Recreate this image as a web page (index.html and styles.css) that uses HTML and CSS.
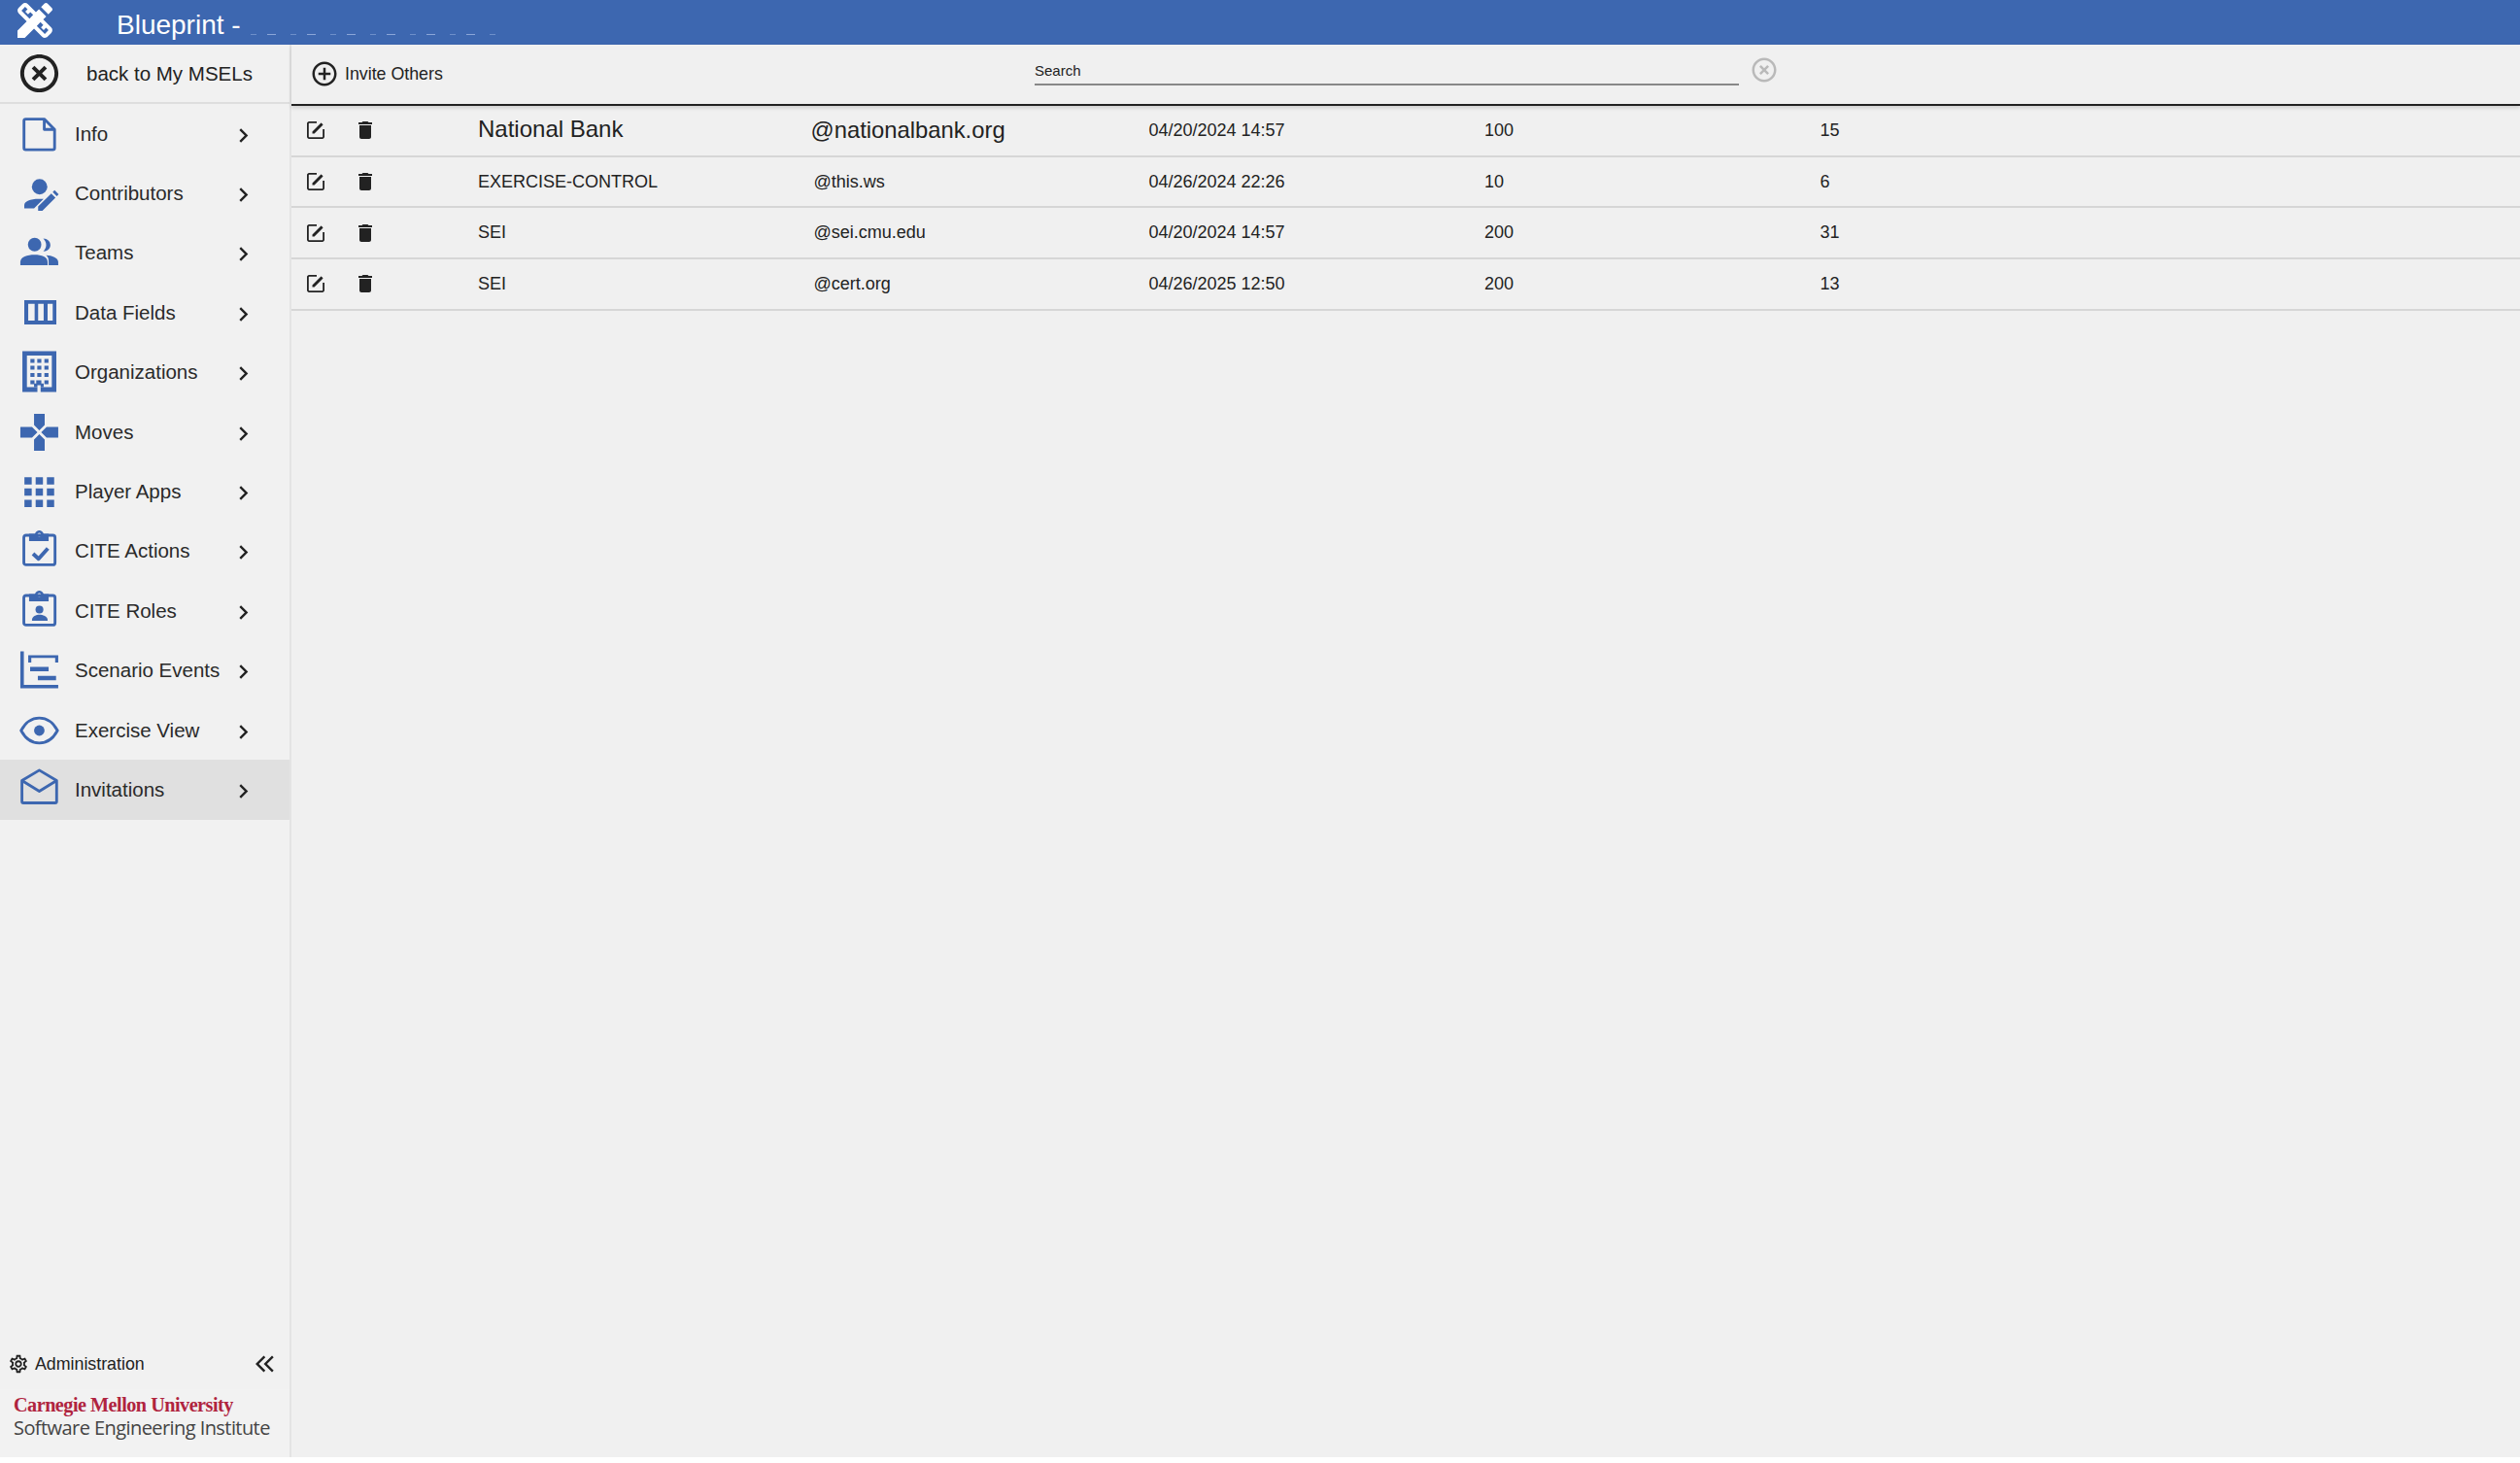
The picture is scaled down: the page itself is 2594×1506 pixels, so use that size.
FILE: index.html
```html
<!DOCTYPE html>
<html lang="en">
<head>
<meta charset="utf-8">
<title>Blueprint</title>
<link rel="stylesheet" href="styles.css">
</head>
<body>
<svg class="sprite" aria-hidden="true">
  <symbol id="i-chev" viewBox="0 0 24 24"><path d="M10 6L8.59 7.41 13.17 12l-4.58 4.59L10 18l6-6z"/></symbol>
  <symbol id="i-edit" viewBox="0 0 24 24"><path d="M3 5.2C3 4 4 3 5.2 3H13v1.800H5.200c-.2 0-.4.200-.4.400v13.600c0 .2.200.4.400.4h13.600c.2 0 .4-.2.400-.4V11H21v7.800c0 1.200-1 2.200-2.200 2.200H5.200C4 21 3 20 3 18.800z"/><path d="M8.500 15.500v-2.100l8.700-8.700c.2-.2.500-.2.700 0l1.400 1.400c.2.200.2.500 0 .7l-8.700 8.700z"/></symbol>
  <symbol id="i-trash" viewBox="0 0 24 24"><path d="M6 19c0 1.100.9 2 2 2h8c1.100 0 2-.9 2-2V7H6v12zM19 4h-3.500l-1-1h-5l-1 1H5v2h14V4z"/></symbol>
</svg>
<div class="page">
  <header class="topbar">
    <svg class="logo" viewBox="0 0 24 24"><path d="M16.240 11.510l1.570-1.570-3.750-3.750-1.570 1.570-4.140-4.130c-.78-.78-2.050-.78-2.830 0l-1.900 1.900c-.78.78-.78 2.050 0 2.830l4.130 4.130L3 17.250V21h3.750l4.760-4.760 4.130 4.130c.95.95 2.230.6 2.830 0l1.900-1.900c.78-.78.78-2.050 0-2.830l-4.130-4.130zM9.180 11.070L5.040 6.940l1.890-1.900 1.270 1.270L7.020 7.500l1.410 1.410 1.190-1.190 1.450 1.450-1.890 1.900zm7.880 7.890l-4.130-4.130 1.900-1.900 1.450 1.450-1.190 1.190 1.410 1.410 1.190-1.190 1.270 1.270-1.900 1.900z"/><path d="M20.710 7.040c.39-.39.39-1.020 0-1.410l-2.340-2.340c-.47-.47-1.120-.29-1.410 0l-1.830 1.830 3.750 3.750 1.830-1.830z"/></svg>
    <span class="app-title">Blueprint -</span>
    <span class="redacted"></span>
  </header>
  <div class="main">
    <aside class="sidebar">
      <div class="back">
        <svg class="back-icon" viewBox="0 0 24 24"><path d="M14.590 8L12 10.590 9.410 8 8 9.410 10.590 12 8 14.590 9.410 16 12 13.410 14.590 16 16 14.590 13.410 12 16 9.410 14.590 8zM12 2C6.470 2 2 6.470 2 12s4.470 10 10 10 10-4.470 10-10S17.530 2 12 2zm0 18c-4.410 0-8-3.590-8-8s3.590-8 8-8 8 3.590 8 8-3.590 8-8 8z"/></svg>
        <span>back to My MSELs</span>
      </div>
      <nav class="nav">
        <div class="nav-item">
          <svg class="nav-icon" viewBox="0 0 24 24"><path class="line" d="M15.700 1.700H3a1.200 1.200 0 0 0-1.200 1.200v18.600A1.200 1.200 0 0 0 3 22.700h18.600a1.200 1.200 0 0 0 1.200-1.200V8.800zM15.700 1.700v7.100h7.100"/></svg>
          <span class="nav-label">Info</span><svg class="chev"><use href="#i-chev"/></svg>
        </div>
        <div class="nav-item">
          <svg class="nav-icon" viewBox="0 0 24 24"><circle cx="12.500" cy="7.500" r="5.300"/><path d="M2 22.300V20c0-2.500 4-4.200 10-4.200h3.200l-6.500 6.500z"/><path d="M11.500 24v-3l9-8.800 2.900 2.800-9 9zM21.500 11.200l1.300-1.300 2.800 2.800-1.300 1.300z"/></svg>
          <span class="nav-label">Contributors</span><svg class="chev"><use href="#i-chev"/></svg>
        </div>
        <div class="nav-item">
          <svg class="nav-icon" viewBox="0 0 24 24"><circle cx="9.100" cy="6.500" r="4.600"/><path d="M15 2.300c2.800 0 4.900 2 4.900 4.500s-2.100 4.400-4.900 4.400c1.200-1.200 2-2.700 2-4.400s-.8-3.300-2-4.500z"/><path d="M-.7 20.700v-2.200c0-3.500 4.700-5 9.700-5s9 1.500 9 5v2.200z"/><path d="M18.700 20.700h6.600v-2.200c0-3-4.300-4.500-8.300-4.700 1.500 1.200 1.700 2.700 1.700 4.700z"/></svg>
          <span class="nav-label">Teams</span><svg class="chev"><use href="#i-chev"/></svg>
        </div>
        <div class="nav-item">
          <svg class="nav-icon" viewBox="0 0 24 24"><path fill-rule="evenodd" d="M2 3.300h22V20H2zM4.700 5.800v11.500h4.400V5.800zM11.500 5.800v11.500h3.800V5.800zM18 5.800v11.500h3.500V5.800z"/></svg>
          <span class="nav-label">Data Fields</span><svg class="chev"><use href="#i-chev"/></svg>
        </div>
        <div class="nav-item">
          <svg class="nav-icon" viewBox="0 0 24 24"><path d="M.7-2.400H24v28H13.200v-3.200h7.700V.7H3.800v21.700H11v3.200H.7z"/><path d="M6.200 3h2.800v2.600H6.200zM10.900 3h2.800v2.600h-2.800zM15.800 3h2.800v2.600h-2.800zM6.200 7.700h2.800v2.600H6.200zM10.900 7.700h2.800v2.600h-2.800zM15.800 7.700h2.800v2.600h-2.800zM6.200 12.700h2.800v2.600H6.200zM10.900 12.700h2.800v2.600h-2.800zM15.800 12.700h2.800v2.600h-2.800zM6.200 17.700h2.800v2.600H6.200zM15.800 17.700h2.800v2.600h-2.800z"/><path d="M8.700 22.400h2.300v-1.400h2.200v1.400h2.100v-2.600H13.700v-2.100h-3.500v2.100H8.700z"/></svg>
          <span class="nav-label">Organizations</span><svg class="chev"><use href="#i-chev"/></svg>
        </div>
        <div class="nav-item">
          <svg class="nav-icon" viewBox="0 0 24 24"><path d="M8.700-.7H16V7l-3.700 3.700L8.700 7zM8.700 24.700H16V17l-3.700-3.700L8.700 17zM-.7 8.300h8L11 12l-3.700 3.700h-8zM25.300 8.300h-8L13.600 12l3.700 3.700h8z"/></svg>
          <span class="nav-label">Moves</span><svg class="chev"><use href="#i-chev"/></svg>
        </div>
        <div class="nav-item">
          <svg class="nav-icon" viewBox="0 0 24 24"><path d="M2.100 2.200h5v5h-5zM9.800 2.200h5v5h-5zM17.500 2.200h5v5h-5zM2.100 9.900h5v5h-5zM9.800 9.900h5v5h-5zM17.500 9.900h5v5h-5zM2.100 17.600h5v5h-5zM9.800 17.600h5v5h-5zM17.500 17.600h5v5h-5z"/></svg>
          <span class="nav-label">Player Apps</span><svg class="chev"><use href="#i-chev"/></svg>
        </div>
        <div class="nav-item">
          <svg class="nav-icon" viewBox="0 0 24 24"><rect class="line" x="1.700" y="1.300" width="21.400" height="20.300" rx="1.500"/><path fill-rule="evenodd" d="M5.300 .4h4c.5-1.500 1.700-2.400 3-2.400s2.500.9 3 2.400h3.400v5H5.300zM12.300-.3a1.300 1.300 0 1 0 0 2.600 1.300 1.300 0 0 0 0-2.600z"/><path class="line thick" d="M8 14l3.800 3.500 6.400-7.200"/></svg>
          <span class="nav-label">CITE Actions</span><svg class="chev"><use href="#i-chev"/></svg>
        </div>
        <div class="nav-item">
          <svg class="nav-icon" viewBox="0 0 24 24"><rect class="line" x="1.700" y="1.300" width="21.400" height="20.300" rx="1.500"/><path fill-rule="evenodd" d="M5.300 .4h4c.5-1.500 1.700-2.400 3-2.400s2.500.9 3 2.400h3.400v5H5.300zM12.300-.3a1.300 1.300 0 1 0 0 2.600 1.300 1.300 0 0 0 0-2.600z"/><circle cx="12.400" cy="11" r="2.700"/><path d="M7.300 18.600v-.8c0-2 3-3.300 5.100-3.300s5.600 1.300 5.600 3.300v.8z"/></svg>
          <span class="nav-label">CITE Roles</span><svg class="chev"><use href="#i-chev"/></svg>
        </div>
        <div class="nav-item">
          <svg class="nav-icon" viewBox="0 0 24 24"><path d="M-.7-1h2.400v23h23.600v2.400H-.7z"/><path d="M4.700 1.600h20.600v5.100h-2.100V3.500H6.800v3.200H4.700zM6 9.600h12.700v3.100H6zM11.300 15.800h12.500v3.100H11.300z"/></svg>
          <span class="nav-label">Scenario Events</span><svg class="chev"><use href="#i-chev"/></svg>
        </div>
        <div class="nav-item">
          <svg class="nav-icon" viewBox="0 0 24 24"><path class="line" d="M-.2 12C3 6 7 3.400 12.300 3.400S21.600 6 24.800 12c-3.200 6-7.200 8.600-12.500 8.600S3 18-.2 12z"/><circle cx="12.300" cy="12" r="3.600"/></svg>
          <span class="nav-label">Exercise View</span><svg class="chev"><use href="#i-chev"/></svg>
        </div>
        <div class="nav-item active">
          <svg class="nav-icon" viewBox="0 0 24 24"><path class="line" d="M12.300-1.400L24.200 5.700V20a1 1 0 0 1-1 1H1.400a1 1 0 0 1-1-1V5.700zM.4 5.700l11.900 7.300 11.900-7.300"/></svg>
          <span class="nav-label">Invitations</span><svg class="chev"><use href="#i-chev"/></svg>
        </div>
      </nav>
      <div class="side-foot">
        <div class="admin">
          <svg class="gear" viewBox="0 0 24 24"><path d="M19.430 12.980c.04-.32.07-.64.07-.98s-.03-.66-.07-.98l2.110-1.650c.19-.15.24-.42.12-.64l-2-3.460c-.12-.22-.39-.3-.61-.22l-2.490 1c-.52-.4-1.080-.73-1.690-.98l-.38-2.650C14.460 2.180 14.250 2 14 2h-4c-.25 0-.46.18-.49.42l-.38 2.650c-.61.25-1.170.59-1.690.98l-2.490-1c-.23-.09-.49 0-.61.22l-2 3.460c-.13.22-.07.49.12.64l2.110 1.650c-.04.32-.07.65-.07.98s.03.66.07.98l-2.110 1.650c-.19.15-.24.42-.12.64l2 3.460c.12.22.39.3.61.22l2.490-1c.52.4 1.080.73 1.690.98l.38 2.650c.03.24.24.42.49.42h4c.25 0 .46-.18.49-.42l.38-2.650c.61-.25 1.170-.59 1.690-.98l2.490 1c.23.09.49 0 .61-.22l2-3.460c.12-.22.07-.49-.12-.64l-2.110-1.650zM17.450 11.270c.04.31.05.52.05.73s-.02.43-.05.73l-.14 1.130.89.7 1.080.84-.7 1.210-1.270-.51-1.040-.42-.9.68c-.43.32-.84.56-1.250.73l-1.060.43-.16 1.130-.2 1.350h-1.400l-.19-1.350-.16-1.130-1.060-.43c-.43-.18-.83-.41-1.230-.71l-.91-.7-1.060.43-1.270.51-.7-1.210 1.080-.84.89-.7-.14-1.130c-.03-.31-.05-.54-.05-.74s.02-.43.05-.73l.14-1.130-.89-.7-1.080-.84.7-1.210 1.270.51 1.040.42.9-.68c.43-.32.84-.56 1.250-.73l1.060-.43.16-1.130.2-1.350h1.390l.19 1.350.16 1.130 1.060.43c.43.18.83.41 1.230.71l.91.7 1.060-.43 1.270-.51.7 1.210-1.070.85-.89.7.14 1.130zM12 8c-2.210 0-4 1.790-4 4s1.790 4 4 4 4-1.790 4-4-1.790-4-4-4zm0 6c-1.100 0-2-.9-2-2s.9-2 2-2 2 .9 2 2-.9 2-2 2z"/></svg>
          <span class="admin-label">Administration</span>
          <svg class="collapse" viewBox="0 0 24 24"><path d="M11.500 3.500l1.700 1.700L6.400 12l6.800 6.800-1.700 1.700L3 12zM20 3.500l1.700 1.700-6.800 6.800 6.800 6.800-1.700 1.700L11.500 12z"/></svg>
        </div>
        <div class="brand">
          <div class="cmu">Carnegie Mellon University</div>
          <div class="sei">Software Engineering Institute</div>
        </div>
      </div>
    </aside>
    <section class="content">
      <div class="toolbar">
        <div class="invite">
          <svg class="invite-icon" viewBox="0 0 24 24"><path d="M13 7h-2v4H7v2h4v4h2v-4h4v-2h-4V7zm-1-5C6.490 2 2 6.490 2 12s4.490 10 10 10 10-4.490 10-10S17.510 2 12 2zm0 18c-4.410 0-8-3.590-8-8s3.590-8 8-8 8 3.590 8 8-3.590 8-8 8z"/></svg>
          <span>Invite Others</span>
        </div>
        <div class="search"><span>Search</span></div>
        <svg class="clear" viewBox="0 0 24 24"><path d="M14.590 8L12 10.590 9.410 8 8 9.410 10.590 12 8 14.590 9.410 16 12 13.410 14.590 16 16 14.590 13.410 12 16 9.410 14.590 8zM12 2C6.470 2 2 6.470 2 12s4.470 10 10 10 10-4.470 10-10S17.530 2 12 2zm0 18c-4.410 0-8-3.590-8-8s3.590-8 8-8 8 3.590 8 8-3.590 8-8 8z"/></svg>
      </div>
      <div class="rows">
        <div class="row big">
          <svg class="edit"><use href="#i-edit"/></svg>
          <svg class="trash"><use href="#i-trash"/></svg>
          <span class="name">National Bank</span><span class="domain">@nationalbank.org</span><span class="date">04/20/2024 14:57</span><span class="num">100</span><span class="num">15</span>
        </div>
        <div class="row">
          <svg class="edit"><use href="#i-edit"/></svg>
          <svg class="trash"><use href="#i-trash"/></svg>
          <span class="name">EXERCISE-CONTROL</span><span class="domain">@this.ws</span><span class="date">04/26/2024 22:26</span><span class="num">10</span><span class="num">6</span>
        </div>
        <div class="row">
          <svg class="edit"><use href="#i-edit"/></svg>
          <svg class="trash"><use href="#i-trash"/></svg>
          <span class="name">SEI</span><span class="domain">@sei.cmu.edu</span><span class="date">04/20/2024 14:57</span><span class="num">200</span><span class="num">31</span>
        </div>
        <div class="row">
          <svg class="edit"><use href="#i-edit"/></svg>
          <svg class="trash"><use href="#i-trash"/></svg>
          <span class="name">SEI</span><span class="domain">@cert.org</span><span class="date">04/26/2025 12:50</span><span class="num">200</span><span class="num">13</span>
        </div>
      </div>
    </section>
  </div>
</div>
</body>
</html>
```
FILE: styles.css
```css
* { box-sizing: border-box; }
html, body { margin: 0; height: 100%; }
body { background: #fff; font-family: "Liberation Sans", Arial, sans-serif; color: #222; }
.sprite { display: none; }
.page { height: 1500px; display: flex; flex-direction: column; background: #f0f0f0; overflow: hidden; }

.topbar { height: 46px; flex: none; background: #3d67b0; color: #fff; display: flex; align-items: center; overflow: hidden; }
.logo { width: 48px; height: 48px; flex: none; fill: #fff; margin-left: 12px; margin-top: -4px; }
.app-title { font-size: 28px; margin-left: 60px; margin-top: 6px; }
.redacted { width: 257px; height: 1px; margin: 24px 0 0 10px; background: repeating-linear-gradient(90deg, #6d8fca 0 6px, transparent 6px 17px, #8aa6d8 17px 26px, transparent 26px 41px); }

.main { flex: 1; display: flex; min-height: 0; }
.sidebar { width: 300px; flex: none; border-right: 2px solid #e4e4e4; display: flex; flex-direction: column; background: #f1f1f1; }
.back { height: 61px; flex: none; display: flex; align-items: center; border-bottom: 2px solid #dedede; font-size: 20.5px; padding-left: 17px; gap: 25px; }
.back-icon { width: 47px; height: 47px; fill: #222; flex: none; }
.nav { display: flex; flex-direction: column; }
.nav-item { height: 61.4px; display: flex; align-items: center; padding-left: 22px; font-size: 20.5px; color: #2a2a2a; }
.nav-item.active { background: #e0e0e0; }
.nav-icon { width: 36px; height: 36px; fill: #3d67b0; flex: none; overflow: visible; margin-right: 19px; }
.line { fill: none; stroke: #3d67b0; stroke-width: 1.9; stroke-linejoin: round; }
.line.thick { stroke-width: 2.6; }
.nav-label { width: 164px; white-space: nowrap; }
.chev { width: 29px; height: 29px; fill: #222; margin-left: -5px; margin-top: 3px; flex: none; }

.side-foot { margin-top: auto; }
.admin { display: flex; align-items: center; height: 46px; padding: 0 0 6px 8px; font-size: 17.8px; color: #222; }
.gear { width: 22px; height: 22px; fill: #222; margin-right: 6px; flex: none; }
.admin-label { width: 224px; }
.collapse { width: 24px; height: 24px; fill: #222; flex: none; }
.brand { padding: 4px 0 8px 14px; background: #f2f2f2; height: 70px; }
.cmu { font-family: "Liberation Serif", serif; font-weight: bold; font-size: 20.2px; letter-spacing: -.5px; color: #b0243f; line-height: 24px; white-space: nowrap; }
.sei { font-family: "Open Sans", sans-serif; font-size: 20px; color: #444; line-height: 24px; white-space: nowrap; letter-spacing: -.57px; }

.content { flex: 1; min-width: 0; }
.toolbar { height: 63px; border-bottom: 2px solid #222; display: flex; align-items: center; box-shadow: 0 2px 4px rgba(0,0,0,.15); }
.invite { display: flex; align-items: center; gap: 6px; font-size: 17.8px; width: 765px; padding-left: 19px; margin-top: -1px; flex: none; }
.invite-icon { width: 30px; height: 30px; fill: #222; flex: none; }
.search { width: 725px; height: 32px; padding-top: 2px; border-bottom: 2px solid #888; font-size: 15px; display: flex; align-items: center; margin-top: -9px; color: #222; flex: none; }
.clear { width: 30px; height: 30px; fill: #b9b9b9; margin-left: 11px; margin-top: -10px; flex: none; }

.row { height: 52.7px; border-bottom: 2px solid #d6d6d6; display: flex; align-items: center; font-size: 18px; color: #222; }
.edit { width: 24px; height: 24px; fill: #222; margin-left: 13px; flex: none; }
.trash { width: 24px; height: 24px; fill: #222; margin-left: 27px; margin-right: 104px; flex: none; }
.name { width: 345.5px; flex: none; }
.domain { width: 345px; flex: none; }
.date { width: 345.5px; flex: none; }
.num { width: 345.5px; flex: none; }
.row.big .name { font-size: 24px; margin-top: -2px; }
.row.big .domain { font-size: 23.8px; margin-left: -3px; margin-right: 3px; }
```
